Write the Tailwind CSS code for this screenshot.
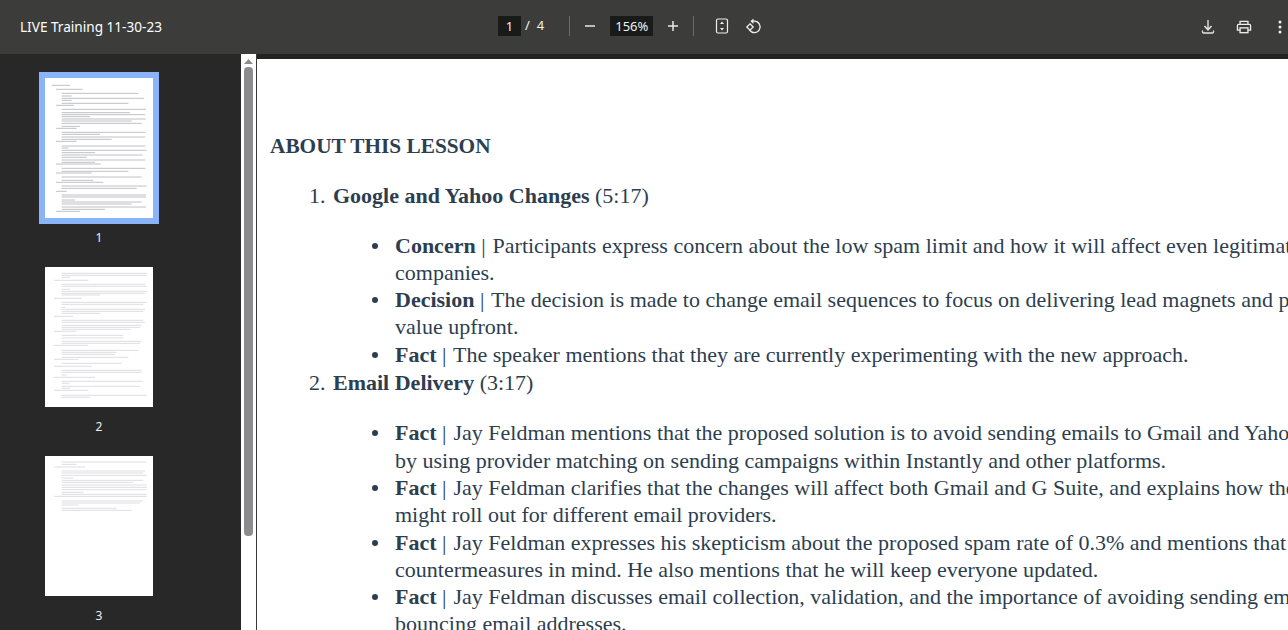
<!DOCTYPE html>
<html lang="en">
<head>
    <meta charset="UTF-8">
    <title>LIVE Training 11-30-23</title>
    <script src="https://cdn.jsdelivr.net/npm/@tailwindcss/browser@4"></script>
</head>
<body class="h-[630px] overflow-hidden bg-[#282828] font-['Noto_Sans',sans-serif]">
    <!-- toolbar -->
    <header class="h-[54px] bg-[#3c3d3b] text-white flex items-center relative">
        <h1 class="pl-5 text-[13.6px]">LIVE Training 11-30-23</h1>
        <div class="absolute left-[498px] top-[16px] h-5 flex items-center text-[13px] text-[#f1f1f1]">
            <span class="w-[23px] h-5 bg-[#191b18] text-center leading-5">1</span>
            <span class="ml-[4px]">/</span>
            <span class="ml-[7px]">4</span>
            <span class="ml-[25px] w-px h-5 bg-[#6b6c6a]"></span>
            <svg class="ml-[13px] w-[14px] h-[14px]" viewBox="0 0 14 14"><path d="M2 7h10" stroke="#e8e8e8" stroke-width="1.5"/></svg>
            <span class="ml-[13px] w-[43px] h-5 bg-[#191b18] text-center leading-5">156%</span>
            <svg class="ml-[13px] w-[14px] h-[14px]" viewBox="0 0 14 14"><path d="M2 7h10M7 2v10" stroke="#e8e8e8" stroke-width="1.5"/></svg>
            <span class="ml-[13px] w-px h-5 bg-[#6b6c6a]"></span>
            <svg class="ml-[21px] w-[14px] h-[16px]" viewBox="0 0 14 16" fill="none"><rect x="1.5" y="1" width="11" height="14" rx="1.5" stroke="#eee" stroke-width="1.2"/><path d="M7 3.500 9 6H5zM7 12.500 5 10h4z" fill="#eee"/></svg>
            <svg class="ml-[15px] w-[18px] h-[18px]" viewBox="0 0 18 18" fill="none"><path d="M7 4.200h3.500a5.700 5.700 0 1 1-5 8.600" stroke="#eee" stroke-width="1.300"/><path d="M9.500 1.500v5.500L6.500 4.200z" fill="#eee"/><path d="M6 6.800 9.200 10 6 13.200 2.800 10z" stroke="#eee" stroke-width="1.300"/></svg>
        </div>
        <div class="ml-auto flex items-center">
            <svg class="w-4 h-4" viewBox="0 0 16 16" fill="none"><path d="M8 1v9" stroke="#d8d8d8" stroke-width="1.500"/><path d="M4.500 7 8 10.800 11.500 7" stroke="#e4e4e4" stroke-width="1.500"/><path d="M2.500 11.500v1.500q0 1 1 1h9q1 0 1-1v-1.500" stroke="#e4e4e4" stroke-width="1.300"/></svg>
            <svg class="ml-5 w-4 h-[14px]" viewBox="0 0 18 16" fill="none" stroke="#eee" stroke-width="1.500"><path d="M4.500 5V1.500h9V5M4.500 11.500H1.500V6.500q0-1.500 1.500-1.500h12q1.500 0 1.500 1.500v5h-3"/><rect x="4.500" y="9" width="9" height="5.500"/></svg>
            <svg class="ml-[26px] mr-[6px] w-1 h-4" viewBox="0 0 4 16" fill="#eee"><circle cx="2" cy="3" r="1.500"/><circle cx="2" cy="8" r="1.500"/><circle cx="2" cy="13" r="1.500"/></svg>
        </div>
    </header>

    <div class="flex h-[576px]">
        <!-- thumbnails -->
        <aside class="w-[241px] shrink-0 flex flex-col items-center pt-6 pr-[43px] text-[12px] leading-4 text-[#eeeeee]">
            <div class="w-[108px] h-[140px] bg-white ring-[6px] ring-[#8ab4f8]">
                <svg class="w-full h-full blur-[0.4px]" viewBox="135 234 324 420" fill="none" stroke="#a0a2a8" stroke-width="2"><path d="M155 256H210M168 268H248M185 280H415M185 288H215M185 295H432M185 301H215M185 310H385M168 316H222M185 328H438M185 338H390M185 344H435M185 350H270M185 357H437M185 363H395M185 370H425M185 379H240M168 385H230M185 397H437M185 403H300M185 411H436M185 418H335M168 424H230M185 438H436M185 444H205M185 451H440M185 458H285M185 465H428M185 472H260M185 480H436M185 487H285M168 492H302M185 505H436M185 514H385M168 519H275M185 531H425M185 541H280M168 547H310M185 558H440M185 565H410M168 574H200M185 585H438M185 591H438M185 600H225M185 606H425M185 612H395M185 621H438M185 628H315M168 634H240"/></svg>
            </div>
            <div class="mt-3 mb-[21px]">1</div>
            <div class="w-[108px] h-[140px] bg-white">
                <svg class="w-full h-full blur-[0.5px]" viewBox="45 21 324 420" fill="none" stroke="#d6d7dc" stroke-width="2.500"><path d="M95 40H350M95 46H350M95 52H120M72 61H175M95 73H345M95 79H350M95 88H120M95 94H350M95 100H345M95 105H210M72 115H155M95 127H350M95 133H340M95 142H105M95 148H345M95 154H340M95 160H210M72 169H130M95 181H340M95 187H345M95 196H335M95 202H330M95 208H300M72 214H140M95 226H280M95 234H280M95 244H335M95 250H330M72 256H175M95 271H325M95 277H260M95 283H255M95 292H295M72 298H145M95 310H275M72 319H185M95 331H335M95 337H335M95 345H110M72 352H195M95 364H340M95 370H118M95 379H330M95 385H120M72 391H175M95 406H350M95 412H180"/></svg>
            </div>
            <div class="mt-3 mb-[21px]">2</div>
            <div class="w-[108px] h-[140px] bg-white">
                <svg class="w-full h-full blur-[0.5px]" viewBox="15 18 324 420" fill="none" stroke="#d6d7dc" stroke-width="2.500"><path d="M65 36H320M65 43H110M42 51H135M65 63H315M65 69H310M65 76H320M65 84H100M65 91H310M65 97H280M65 105H320M65 112H320M65 119H320M65 127H130M65 133H320M42 139H320M65 153H310M65 159H300M65 165H115M65 175H230M65 181H275"/></svg>
            </div>
            <div class="mt-3">3</div>
        </aside>

        <!-- thumbnail scrollbar -->
        <div class="w-[15px] shrink-0 bg-white flex flex-col items-center">
            <svg class="mt-[5px] w-[9px] h-[5px]" viewBox="0 0 9 5"><path d="M4.500 0 9 5H0z" fill="#8c8b8d"/></svg>
            <div class="mt-[3px] w-[9px] h-[469px] rounded-[4px] bg-[#8c8b8d]"></div>
        </div>
        <div class="w-px shrink-0 bg-[#3a3a3a]"></div>

        <!-- page -->
        <main class="flex-1 min-w-0 overflow-hidden">
            <div class="h-[5px] bg-[#222322]"></div>
            <article class="bg-white h-full pt-[74px] pl-[13px] font-['Liberation_Serif',serif] text-[22px] leading-[27.3px] text-[#2c3e50] whitespace-nowrap">
                <h2 class="font-bold text-[21.3px]">ABOUT THIS LESSON</h2>
                <ol class="mt-[22px] ml-[39px]">
                    <li class="flex">
                        <span class="w-6 shrink-0">1.</span>
                        <div>
                            <b>Google and Yahoo Changes</b> (5:17)
                            <ul class="mt-[22px] ml-[39px]">
                                <li class="flex"><span class="shrink-0 w-[6px] h-[6px] mt-[11px] mr-[17px] rounded-full bg-[#2c3e50]"></span><div><b>Concern</b> <span class="mr-[1.5px]">|</span> Participants express concern about the low spam limit and how it will affect even legitimate<br>companies.</div></li>
                                <li class="flex"><span class="shrink-0 w-[6px] h-[6px] mt-[11px] mr-[17px] rounded-full bg-[#2c3e50]"></span><div><b>Decision</b> <span class="mr-[1.5px]">|</span> The decision is made to change email sequences to focus on delivering lead magnets and providing<br>value upfront.</div></li>
                                <li class="flex"><span class="shrink-0 w-[6px] h-[6px] mt-[11px] mr-[17px] rounded-full bg-[#2c3e50]"></span><div><b>Fact</b> <span class="mr-[1.5px]">|</span> The speaker mentions that they are currently experimenting with the new approach.</div></li>
                            </ul>
                        </div>
                    </li>
                    <li class="flex mt-px">
                        <span class="w-6 shrink-0">2.</span>
                        <div>
                            <b>Email Delivery</b> (3:17)
                            <ul class="mt-[23px] ml-[39px]">
                                <li class="flex"><span class="shrink-0 w-[6px] h-[6px] mt-[11px] mr-[17px] rounded-full bg-[#2c3e50]"></span><div><b>Fact</b> <span class="mr-[1.5px]">|</span> Jay Feldman mentions that the proposed solution is to avoid sending emails to Gmail and Yahoo<br>by using provider matching on sending campaigns within Instantly and other platforms.</div></li>
                                <li class="flex"><span class="shrink-0 w-[6px] h-[6px] mt-[11px] mr-[17px] rounded-full bg-[#2c3e50]"></span><div><b>Fact</b> <span class="mr-[1.5px]">|</span> Jay Feldman clarifies that the changes will affect both Gmail and G Suite, and explains how they<br>might roll out for different email providers.</div></li>
                                <li class="flex"><span class="shrink-0 w-[6px] h-[6px] mt-[11px] mr-[17px] rounded-full bg-[#2c3e50]"></span><div><b>Fact</b> <span class="mr-[1.5px]">|</span> Jay Feldman expresses his skepticism about the proposed spam rate of 0.3% and mentions that<br>countermeasures in mind. He also mentions that he will keep everyone updated.</div></li>
                                <li class="flex"><span class="shrink-0 w-[6px] h-[6px] mt-[11px] mr-[17px] rounded-full bg-[#2c3e50]"></span><div><b>Fact</b> <span class="mr-[1.5px]">|</span> Jay Feldman discusses email collection, validation, and the importance of avoiding sending emails<br>bouncing email addresses.</div></li>
                            </ul>
                        </div>
                    </li>
                </ol>
            </article>
        </main>
    </div>
</body>
</html>
